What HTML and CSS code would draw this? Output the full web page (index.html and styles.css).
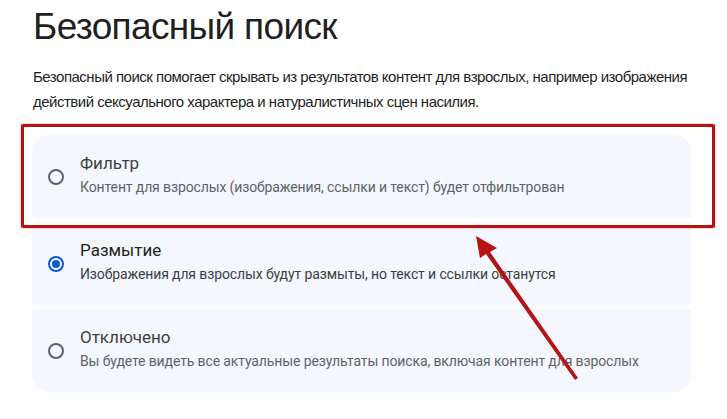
FILE: index.html
```html
<!DOCTYPE html>
<html lang="ru">
<head>
<meta charset="utf-8">
<link rel="stylesheet" href="styles.css">
</head>
<body>
<main class="page">
  <h1 class="title">Безопасный поиск</h1>
  <p class="intro">Безопасный поиск помогает скрывать из результатов контент для взрослых, например изображения действий сексуального характера и натуралистичных сцен насилия.</p>
  <div class="options">
    <div class="option">
      <span class="radio"></span>
      <div class="texts">
        <div class="opt-title">Фильтр</div>
        <div class="opt-desc">Контент для взрослых (изображения, ссылки и текст) будет отфильтрован</div>
      </div>
    </div>
    <div class="option selected">
      <span class="radio"></span>
      <div class="texts">
        <div class="opt-title">Размытие</div>
        <div class="opt-desc">Изображения для взрослых будут размыты, но текст и ссылки останутся</div>
      </div>
    </div>
    <div class="option">
      <span class="radio"></span>
      <div class="texts">
        <div class="opt-title">Отключено</div>
        <div class="opt-desc">Вы будете видеть все актуальные результаты поиска, включая контент для взрослых</div>
      </div>
    </div>
  </div>
</main>
<div class="highlight"></div>
<svg class="arrow" width="727" height="419" viewBox="0 0 727 419">
  <polygon points="476,236 497,248 490,252 578,378 575,380 486,254 480,258" fill="#b51414"/>
</svg>
</body>
</html>
```
FILE: styles.css
```css
html, body {
  margin: 0;
  padding: 0;
  background: #ffffff;
}
body {
  width: 727px;
  height: 419px;
  overflow: hidden;
  position: relative;
}
.page {
  padding: 0 35px 0 33px;
}
.title {
  margin: 0;
  padding-top: 5px;
  font-family: "Liberation Sans", Arial, sans-serif;
  font-weight: 400;
  font-size: 37px;
  line-height: 44px;
  color: #1f1f1f;
  letter-spacing: -0.65px;
}
.intro {
  margin: 15px 0 0 0;
  font-family: "Liberation Sans", Arial, sans-serif;
  font-size: 15px;
  line-height: 25px;
  color: #1f1f1f;
  letter-spacing: -0.5px;
}
.options {
  margin-top: 21px;
  display: flex;
  flex-direction: column;
  gap: 4px;
  width: 659px;
  margin-left: -1px;
}
.option {
  display: flex;
  align-items: center;
  height: 83px;
  background: #f4f7fd;
  border-radius: 4px;
  padding-left: 16px;
  box-sizing: border-box;
}
.option:first-child {
  border-radius: 16px 16px 4px 4px;
}
.option:last-child {
  border-radius: 4px 4px 16px 16px;
}
.radio {
  width: 12px;
  height: 12px;
  border: 2px solid #5f6368;
  border-radius: 50%;
  box-sizing: content-box;
  flex: none;
  position: relative;
}
.selected .radio {
  border-color: #0b57d0;
}
.selected .radio::after {
  content: "";
  position: absolute;
  left: 2px;
  top: 2px;
  width: 8px;
  height: 8px;
  border-radius: 50%;
  background: #0b57d0;
}
.texts {
  margin-left: 16px;
  padding-bottom: 3px;
  font-family: Roboto, "Liberation Sans", sans-serif;
}
.opt-title {
  font-size: 17px;
  line-height: 24px;
  color: #3c4043;
}
.opt-desc {
  font-size: 14px;
  line-height: 24px;
  color: #5f6368;
  letter-spacing: -0.12px;
}
.selected .opt-title {
  color: #1f1f1f;
}
.selected .opt-desc {
  color: #3c4043;
}
.highlight {
  position: absolute;
  left: 21px;
  top: 124px;
  width: 688px;
  height: 98px;
  border: 3px solid #b51414;
  border-radius: 2px;
  box-shadow: 0 0 2px rgba(181, 20, 20, 0.5);
}
.arrow {
  position: absolute;
  left: 0;
  top: 0;
}
```
